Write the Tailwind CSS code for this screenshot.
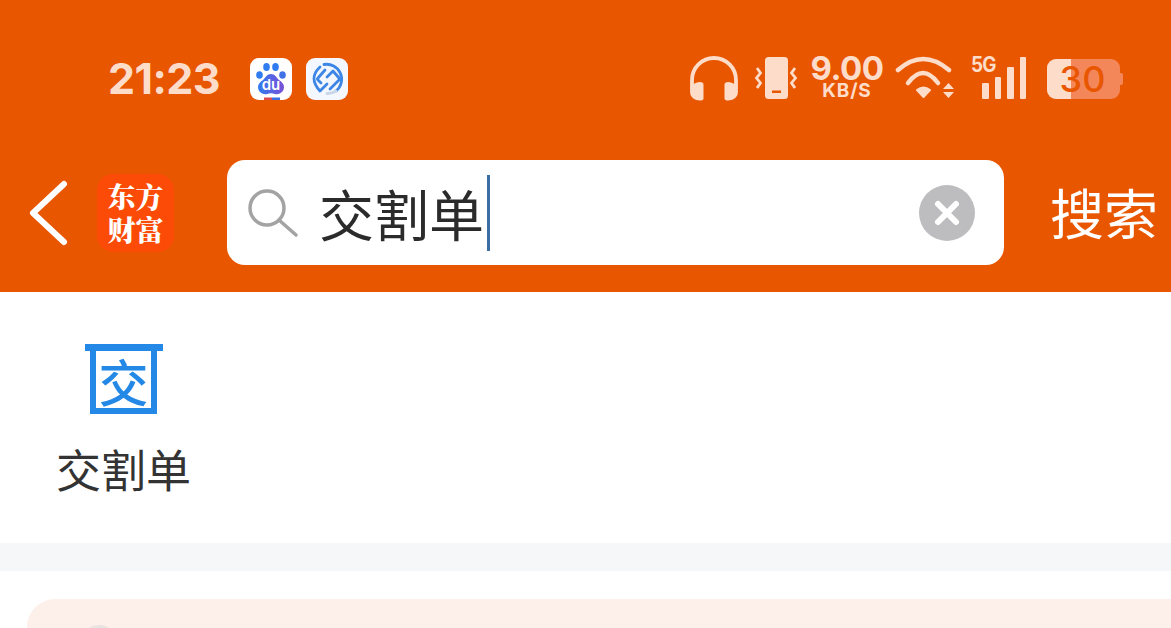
<!DOCTYPE html>
<html lang="zh-CN">
<head>
  <meta charset="UTF-8">
  <title>搜索</title>
  <script src="https://cdn.jsdelivr.net/npm/@tailwindcss/browser@4"></script>
</head>
<body class="bg-white font-['Noto_Sans_CJK_SC','Noto_Sans',sans-serif] overflow-hidden">
  <div class="w-[1171px] h-[628px] overflow-hidden bg-white">
    <!-- Orange header -->
    <header class="h-[292px] bg-[#e95600] flex flex-col">
      <!-- Status bar -->
      <div class="h-[160px] pt-[52px] pl-[108px] pr-[48px] flex items-start text-[#fddcc9] font-['Inter',sans-serif]">
        <span class="text-[43px] leading-[52px] font-bold w-[142px] tracking-[-0.6px]">21:23</span>
        <!-- Baidu -->
        <div class="w-[42px] h-[42px] mt-[6px] rounded-[9px] bg-white flex items-center justify-center">
          <svg width="42" height="42" viewBox="0 0 42 42">
            <defs><linearGradient id="bd" x1="0" x2="1"><stop offset="0" stop-color="#2f7bef"/><stop offset="1" stop-color="#7a4fd8"/></linearGradient></defs>
            <ellipse cx="16.500" cy="9" rx="3.300" ry="4" fill="#2f7bef"/>
            <ellipse cx="25.500" cy="9" rx="3.300" ry="4" fill="#2f7bef"/>
            <ellipse cx="9.500" cy="17" rx="3.300" ry="3.800" fill="#2f7bef"/>
            <ellipse cx="32.500" cy="17" rx="3.300" ry="3.800" fill="#3f72e6"/>
            <path d="M21 16c-4 0-5 3-8 6-3 2-5 4-5 7 0 5 5 8 9 7 2-.6 2.500-.8 4-.8s2 .2 4 .8c4 1 9-2 9-7 0-3-2-5-5-7-3-3-4-6-8-6z" fill="url(#bd)"/>
            <text x="21" y="32" text-anchor="middle" font-family="Inter, sans-serif" font-size="15" font-weight="600" fill="#fff">du</text>
            <rect x="14" y="39.500" width="8" height="2.500" fill="#e04a4a"/>
            <rect x="22" y="39.500" width="8" height="2.500" fill="#3a6fe0"/>
          </svg>
        </div>
        <!-- Second app icon -->
        <div class="w-[42px] h-[42px] mt-[6px] ml-[14px] rounded-[9px] bg-[#f4f8fe] flex items-center justify-center">
          <svg width="42" height="42" viewBox="0 0 42 42" fill="none" stroke="#3d86e6" stroke-width="2.800" stroke-linecap="round" stroke-linejoin="round">
            <path d="M18 6.500A15 15 0 0 1 30 33"/>
            <path d="M14 9Q2 20 14 33l7-7"/>
            <path d="M19 12l-7 8q-1 1 0 2l3 3"/>
            <path d="M21 19l6-6 6 7q1 1 0 2l-9 9"/>
            <path d="M21 35.500a15 15 0 0 0 9-2.500" stroke="#c9d6e8"/>
          </svg>
        </div>
        <div class="flex-1"></div>
        <!-- Headphones -->
        <svg class="mt-[4px]" width="50" height="46" viewBox="0 0 50 46" fill="none">
          <path d="M3 33v-9a22 22 0 0 1 44 0v9" stroke="#fddcc9" stroke-width="3.800"/>
          <path d="M1 35.500c0-6 5-9.500 10-9.500 2 0 3.500 1 3.500 2.500v14c0 1.500-1.500 2-3.500 2-5 0-10-3-10-9zM49 35.500c0-6-5-9.500-10-9.500-2 0-3.500 1-3.500 2.500v14c0 1.500 1.500 2 3.500 2 5 0 10-3 10-9z" fill="#fddcc9"/>
        </svg>
        <!-- Vibrate -->
        <svg class="ml-[15px] mt-[4px]" width="44" height="44" viewBox="0 0 44 44" fill="none">
          <rect x="11" y="1" width="23" height="42" rx="3.500" fill="#fddcc9"/>
          <rect x="18" y="34.500" width="9" height="2.500" fill="#e95600"/>
          <path d="M3 12l3.500 5-4 5 4 5-3.500 5M41 12l-3.500 5 4 5-4 5 3.500 5" stroke="#fddcc9" stroke-width="2.800"/>
        </svg>
        <!-- Speed -->
        <div class="ml-[13px] mt-[1px] w-[72px] flex flex-col items-center font-bold">
          <span class="text-[33px] leading-[30px] tracking-[-0.5px]">9.00</span>
          <span class="text-[19px] leading-[16px] tracking-[0.8px]">KB/S</span>
        </div>
        <!-- Wifi -->
        <svg class="ml-[12px] mt-[4px]" width="60" height="44" viewBox="0 0 60 44" fill="none" stroke="#fddcc9" stroke-width="4.500" stroke-linecap="round">
          <path d="M3 14Q28-8 54 14"/>
          <path d="M13 27Q28 7 43 27"/>
          <path d="M22 34Q28.500 29 35 34L28.500 41z" fill="#fddcc9" stroke-width="2" stroke-linejoin="round"/>
          <path d="M48 33l5.500-6 5.500 6zM48 36l5.500 6 5.500-6z" fill="#fddcc9" stroke="none"/>
        </svg>
        <!-- 5G signal -->
        <div class="ml-[16px] mt-[1px] relative w-[56px] h-[46px]">
          <span class="absolute left-0 top-[0px] text-[21px] leading-[24px] font-bold tracking-[-1px] scale-x-90 origin-left">5G</span>
          <div class="absolute left-[11px] top-[4px] h-[42px] flex items-end gap-[6px]">
            <div class="w-[6.500px] h-[16px] rounded-[1px] bg-[#fddcc9]"></div>
            <div class="w-[6.500px] h-[22px] rounded-[1px] bg-[#fddcc9]"></div>
            <div class="w-[6.500px] h-[32px] rounded-[1px] bg-[#fddcc9]"></div>
            <div class="w-[6.500px] h-[42px] rounded-[1px] bg-[#fddcc9]"></div>
          </div>
        </div>
        <!-- Battery -->
        <div class="ml-[20px] mt-[7px] flex items-center">
          <div class="relative w-[73px] h-[40px] rounded-[9px] bg-[#f4875a]">
            <div class="h-full w-[24px] rounded-l-[9px] bg-[#fddcc9]"></div>
            <span class="absolute inset-0 flex items-center justify-center text-[36px] font-medium leading-none text-[#e95600] pr-[2px]">30</span>
          </div>
          <div class="w-[3px] h-[12px] rounded-r-[2px] bg-[#f4875a]"></div>
        </div>
      </div>

      <!-- Nav row -->
      <div class="flex items-start">
        <svg class="ml-[29px] mt-[20px]" width="40" height="66" viewBox="0 0 40 66" fill="none" stroke="#fff" stroke-width="6" stroke-linecap="round" stroke-linejoin="round">
          <path d="M35 4L4 33l31 29"/>
        </svg>
        <div class="ml-[28px] mt-[14px] w-[77px] h-[78px] rounded-[16px] bg-[#fb4b06] flex flex-col items-center justify-center text-white text-[28px] leading-[33px] font-['Noto_Serif_CJK_SC','Noto_Sans_CJK_SC',sans-serif] font-black">
          <span>东方</span>
          <span>财富</span>
        </div>
        <!-- Search box -->
        <div class="ml-[53px] w-[777px] h-[105px] rounded-[18px] bg-white flex items-center pl-[21px] pr-[29px]">
          <svg width="52" height="52" viewBox="0 0 52 52" fill="none" stroke="#a3a3a3" stroke-width="3.500" stroke-linecap="round">
            <circle cx="19" cy="21" r="17"/>
            <path d="M31 33l17 15"/>
          </svg>
          <span class="ml-[19px] text-[55px] leading-none text-[#2b2b2b]">交割单</span>
          <div class="ml-[3px] w-[3px] h-[76px] bg-[#3a6ea5]"></div>
          <div class="flex-1"></div>
          <div class="w-[56px] h-[56px] rounded-full bg-[#bdbdbf] flex items-center justify-center">
            <svg width="28" height="28" viewBox="0 0 28 28" stroke="#fff" stroke-width="6" stroke-linecap="round"><path d="M5 5l18 18M23 5L5 23"/></svg>
          </div>
        </div>
        <span class="ml-[46px] mt-[19px] text-[54px] leading-[66px] text-white whitespace-nowrap">搜索</span>
      </div>
    </header>

    <!-- Result -->
    <section class="h-[251px] flex flex-col items-start">
      <div class="w-[135px] ml-[56px] flex flex-col items-center">
        <div class="mt-[52px] flex flex-col items-center">
          <div class="w-[78px] h-[7px] bg-[#2388e6]"></div>
          <div class="w-[67px] h-[63px] border-x-[6px] border-b-[6px] border-[#2388e6] flex items-center justify-center text-[50px] leading-none text-[#2388e6] font-medium">交</div>
        </div>
        <span class="mt-[27px] text-[45px] leading-[56px] text-[#333] whitespace-nowrap">交割单</span>
      </div>
    </section>

    <div class="h-[28px] bg-[#f6f7f9]"></div>

    <!-- Next card -->
    <div class="pt-[28px] pl-[27px]">
      <div class="h-[60px] rounded-tl-[28px] bg-[#fdf0ea] pl-[54px] pt-[26px]">
        <div class="w-[36px] h-[36px] rounded-full bg-[#e8e4e2]"></div>
      </div>
    </div>
  </div>
</body>
</html>
